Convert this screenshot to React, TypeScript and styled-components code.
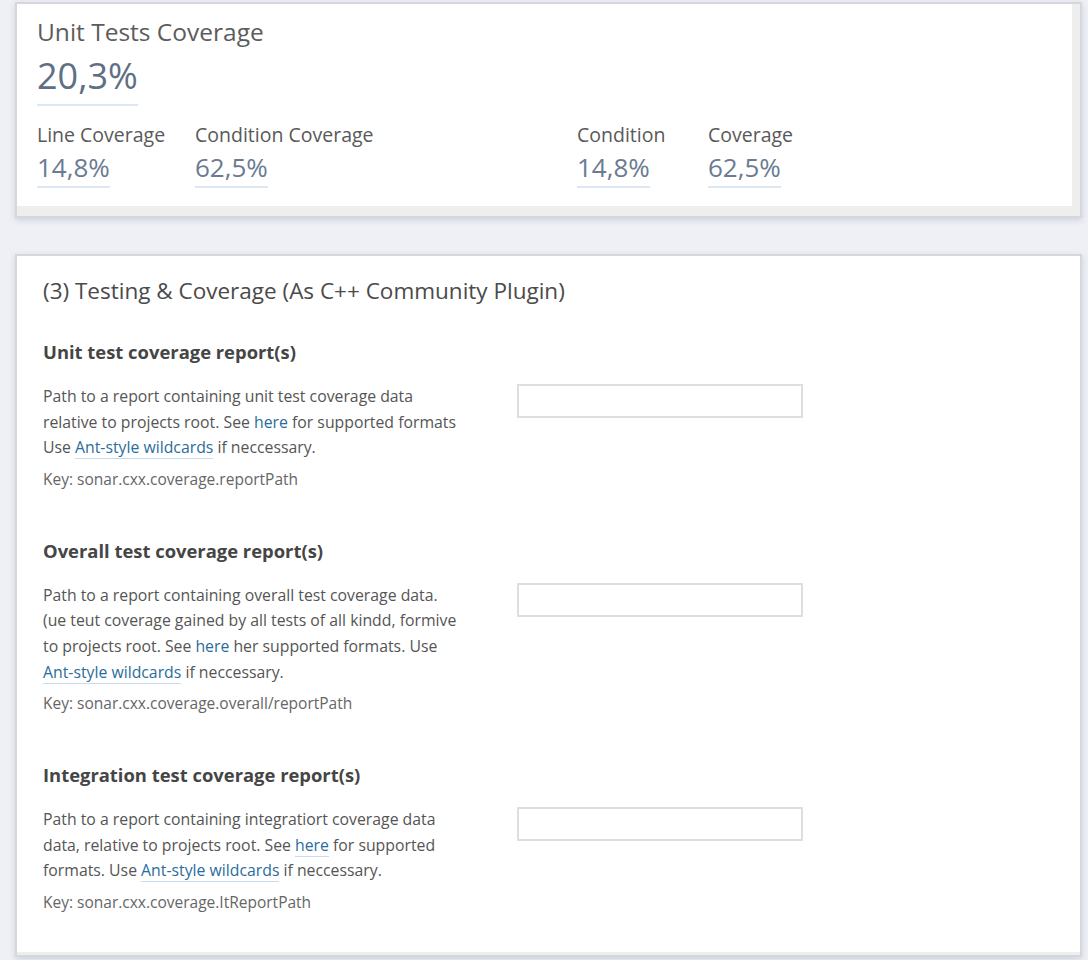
import styled, { createGlobalStyle } from 'styled-components'

const GlobalStyle = createGlobalStyle`
  html, body {
    margin: 0;
    padding: 0;
    background: #eef0f6;
  }
  body {
    font-family: 'Open Sans', 'Noto Sans', sans-serif;
    color: #555;
  }
`

const Page = styled.div`
  width: 1088px;
  height: 960px;
  padding: 2px 6px 0 15px;
  box-sizing: border-box;
  display: flex;
  flex-direction: column;
  gap: 36px;
`

/* card with a grey inner rim on the right and bottom */
const Card = styled.section<{ $height: number }>`
  height: ${(p) => p.$height}px;
  background: #eeeeee;
  border: 2px solid #d6d7da;
  box-shadow: 0 2px 6px rgba(60, 70, 90, 0.18);
  display: flex;
  box-sizing: border-box;
`

const CardBody = styled.div<{ $rimRight: number; $rimBottom: number }>`
  flex: 1;
  background: #fff;
  margin: 0 ${(p) => p.$rimRight}px ${(p) => p.$rimBottom}px 0;
`

const SummaryBody = styled.div`
  padding: 12px 0 0 20px;
`

const SummaryTitle = styled.h2`
  margin: 0;
  font-size: 24.5px;
  font-weight: 400;
  color: #5c5c5c;
  line-height: 32px;
`

const BigValue = styled.div`
  display: inline-block;
  margin-top: 6px;
  font-size: 36px;
  line-height: 44px;
  font-weight: 400;
  color: #5f6f84;
  padding-bottom: 6px;
  border-bottom: 2px solid #dbe7f3;
`

const Metrics = styled.div`
  display: grid;
  grid-template-columns: 158px 382px 131px auto;
  margin-top: 14px;
`

const Metric = styled.div`
  display: flex;
  flex-direction: column;
  align-items: flex-start;
`

const MetricLabel = styled.span`
  font-size: 19.5px;
  line-height: 30px;
  color: #595959;
`

const MetricValue = styled.span`
  font-size: 26px;
  line-height: 34px;
  color: #6a7b92;
  padding-bottom: 2px;
  border-bottom: 2px solid #dbe7f3;
`

const SettingsBody = styled.div`
  padding: 20px 0 0 26px;
`

const SettingsTitle = styled.h2`
  margin: 0 0 34px;
  font-size: 22.5px;
  font-weight: 400;
  line-height: 30px;
  color: #4a4a4a;
`

const Setting = styled.div`
  display: grid;
  grid-template-columns: 474px 286px;
  margin-bottom: 50px;
`

const SettingText = styled.div``

const SettingName = styled.h3`
  margin: 0 0 20px;
  font-size: 18.4px;
  font-weight: 700;
  line-height: 24px;
  color: #454545;
`

const Description = styled.p`
  margin: 0;
  font-size: 15.8px;
  line-height: 25.6px;
  color: #555;
  white-space: nowrap;
`

const Link = styled.a<{ $underline?: boolean }>`
  color: #2a6d9c;
  text-decoration: none;
  border-bottom: ${(p) => (p.$underline ? '1px solid #c9dced' : 'none')};
`

const Key = styled.div`
  margin-top: 8px;
  font-size: 15.5px;
  line-height: 20px;
  color: #666;
`

const TextInput = styled.input`
  margin-top: 44px;
  width: 286px;
  height: 34px;
  box-sizing: border-box;
  border: 2px solid #dedede;
  background: #fff;
  outline: none;
`

type SettingProps = {
  name: string
  keyName: string
  children: React.ReactNode
}

const SettingRow = ({ name, keyName, children }: SettingProps) => (
  <Setting>
    <SettingText>
      <SettingName>{name}</SettingName>
      <Description>{children}</Description>
      <Key>Key: {keyName}</Key>
    </SettingText>
    <TextInput type="text" />
  </Setting>
)

const App = () => (
  <>
    <GlobalStyle />
    <Page>
      <Card $height={216}>
        <CardBody $rimRight={8} $rimBottom={10}>
          <SummaryBody>
            <SummaryTitle>Unit Tests Coverage</SummaryTitle>
            <BigValue>20,3%</BigValue>
            <Metrics>
              <Metric>
                <MetricLabel>Line Coverage</MetricLabel>
                <MetricValue>14,8%</MetricValue>
              </Metric>
              <Metric>
                <MetricLabel>Condition Coverage</MetricLabel>
                <MetricValue>62,5%</MetricValue>
              </Metric>
              <Metric>
                <MetricLabel>Condition</MetricLabel>
                <MetricValue>14,8%</MetricValue>
              </Metric>
              <Metric>
                <MetricLabel>Coverage</MetricLabel>
                <MetricValue>62,5%</MetricValue>
              </Metric>
            </Metrics>
          </SummaryBody>
        </CardBody>
      </Card>

      <Card $height={703}>
        <CardBody $rimRight={0} $rimBottom={3}>
          <SettingsBody>
            <SettingsTitle>(3) Testing &amp; Coverage (As C++ Community Plugin)</SettingsTitle>

            <SettingRow name="Unit test coverage report(s)" keyName="sonar.cxx.coverage.reportPath">
              Path to a report containing unit test coverage data
              <br />
              relative to projects root. See <Link>here</Link> for supported formats
              <br />
              Use <Link $underline>Ant-style wildcards</Link> if neccessary.
            </SettingRow>

            <SettingRow name="Overall test coverage report(s)" keyName="sonar.cxx.coverage.overall/reportPath">
              Path to a report containing overall test coverage data.
              <br />
              (ue teut coverage gained by all tests of all kindd, formive
              <br />
              to projects root. See <Link>here</Link> her supported formats. Use
              <br />
              <Link $underline>Ant-style wildcards</Link> if neccessary.
            </SettingRow>

            <SettingRow name="Integration test coverage report(s)" keyName="sonar.cxx.coverage.ItReportPath">
              Path to a report containing integratiort coverage data
              <br />
              data, relative to projects root. See <Link $underline>here</Link> for supported
              <br />
              formats. Use <Link $underline>Ant-style wildcards</Link> if neccessary.
            </SettingRow>
          </SettingsBody>
        </CardBody>
      </Card>
    </Page>
  </>
)

export default App
